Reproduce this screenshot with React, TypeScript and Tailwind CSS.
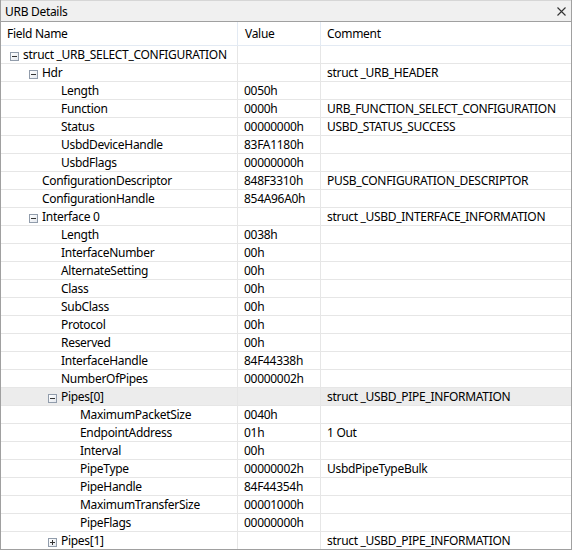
import React from "react";

type Row = {
  name: string;
  value?: string;
  comment?: string;
  level: number;
  expander?: "open" | "closed";
  selected?: boolean;
};

const rows: Row[] = [
  { name: "struct _URB_SELECT_CONFIGURATION", level: 0, expander: "open" },
  { name: "Hdr", level: 1, expander: "open", comment: "struct _URB_HEADER" },
  { name: "Length", level: 2, value: "0050h" },
  { name: "Function", level: 2, value: "0000h", comment: "URB_FUNCTION_SELECT_CONFIGURATION" },
  { name: "Status", level: 2, value: "00000000h", comment: "USBD_STATUS_SUCCESS" },
  { name: "UsbdDeviceHandle", level: 2, value: "83FA1180h" },
  { name: "UsbdFlags", level: 2, value: "00000000h" },
  { name: "ConfigurationDescriptor", level: 1, value: "848F3310h", comment: "PUSB_CONFIGURATION_DESCRIPTOR" },
  { name: "ConfigurationHandle", level: 1, value: "854A96A0h" },
  { name: "Interface 0", level: 1, expander: "open", comment: "struct _USBD_INTERFACE_INFORMATION" },
  { name: "Length", level: 2, value: "0038h" },
  { name: "InterfaceNumber", level: 2, value: "00h" },
  { name: "AlternateSetting", level: 2, value: "00h" },
  { name: "Class", level: 2, value: "00h" },
  { name: "SubClass", level: 2, value: "00h" },
  { name: "Protocol", level: 2, value: "00h" },
  { name: "Reserved", level: 2, value: "00h" },
  { name: "InterfaceHandle", level: 2, value: "84F44338h" },
  { name: "NumberOfPipes", level: 2, value: "00000002h" },
  { name: "Pipes[0]", level: 2, expander: "open", selected: true, comment: "struct _USBD_PIPE_INFORMATION" },
  { name: "MaximumPacketSize", level: 3, value: "0040h" },
  { name: "EndpointAddress", level: 3, value: "01h", comment: "1 Out" },
  { name: "Interval", level: 3, value: "00h" },
  { name: "PipeType", level: 3, value: "00000002h", comment: "UsbdPipeTypeBulk" },
  { name: "PipeHandle", level: 3, value: "84F44354h" },
  { name: "MaximumTransferSize", level: 3, value: "00001000h" },
  { name: "PipeFlags", level: 3, value: "00000000h" },
  { name: "Pipes[1]", level: 2, expander: "closed", comment: "struct _USBD_PIPE_INFORMATION" },
];

const indent = ["pl-[22px]", "pl-[41px]", "pl-[60px]", "pl-[79px]"];
const boxIndent = ["pl-[9px]", "pl-[28px]", "pl-[47px]", "pl-[66px]"];

function Expander({ open }: { open: boolean }) {
  return (
    <span className="w-[9px] h-[9px] mt-[6px] mr-[4px] border border-[#919cab] bg-gradient-to-br from-white to-[#e4e8ee] flex items-center justify-center shrink-0">
      <svg width="7" height="7" viewBox="0 0 7 7">
        <rect x="1" y="3" width="5" height="1" fill="#333" />
        {!open && <rect x="3" y="1" width="1" height="5" fill="#333" />}
      </svg>
    </span>
  );
}

export default function App() {
  return (
    <div
      className="w-[572px] h-[550px] overflow-hidden bg-white border-x border-b border-[#a0a0a0] text-[12px] tracking-[-0.3px] text-black flex flex-col"
      style={{ fontFamily: '"Noto Sans", "Open Sans", sans-serif' }}
    >
      {/* title bar */}
      <div className="h-[22px] shrink-0 bg-[#f0f0f0] border-t border-b border-[#a0a0a0] border-t-[#d6d6d6] flex items-center justify-between pl-[4px] pr-[4px]">
        <span className="leading-[20px] pt-[1px]">URB Details</span>
        <svg width="9" height="9" viewBox="0 0 9 9" className="mr-[1px]">
          <path d="M0.5 0.5 L8.5 8.5 M8.5 0.5 L0.5 8.5" stroke="#333" strokeWidth="1.1" />
        </svg>
      </div>

      {/* header */}
      <div className="grid grid-cols-[237px_83px_1fr] h-[24px] shrink-0 border-b border-[#e3eaf3]">
        <div className="border-r border-[#e3eaf3] pl-[6px] leading-[23px]">Field Name</div>
        <div className="border-r border-[#e3eaf3] pl-[7px] leading-[23px]">Value</div>
        <div className="pl-[6px] leading-[23px]">Comment</div>
      </div>

      {/* rows */}
      <div className="flex flex-col shrink-0">
        {rows.map((r, i) => (
          <div
            key={i}
            className={`grid grid-cols-[237px_83px_1fr] h-[18px] shrink-0 border-b border-[#e6e6e6] leading-[17px] ${
              r.selected ? "bg-[#ececec]" : ""
            }`}
          >
            <div
              className={`border-r border-[#e6e6e6] flex items-start whitespace-nowrap ${
                r.expander ? boxIndent[r.level] : indent[r.level]
              }`}
            >
              {r.expander && <Expander open={r.expander === "open"} />}
              <span>{r.name}</span>
            </div>
            <div className="border-r border-[#e6e6e6] pl-[6px] whitespace-nowrap">{r.value ?? ""}</div>
            <div className="pl-[6px] whitespace-nowrap">{r.comment ?? ""}</div>
          </div>
        ))}
      </div>
    </div>
  );
}
